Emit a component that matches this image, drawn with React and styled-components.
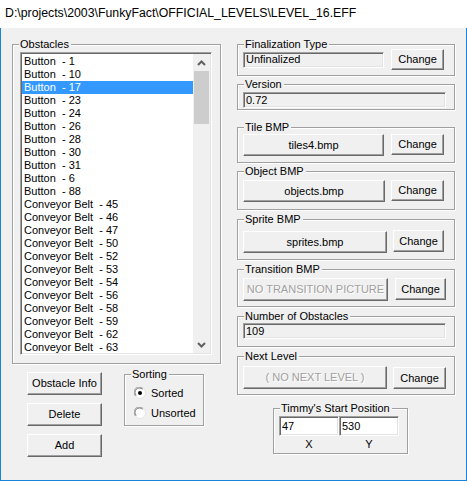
import React from 'react';
import styled, { createGlobalStyle } from 'styled-components';

const Global = createGlobalStyle`
  html, body { margin: 0; padding: 0; background: #fff; }
  body { font-family: "Liberation Sans", Arial, sans-serif; font-size: 11px; color: #000; }
  * { box-sizing: border-box; }
`;

const Window = styled.div`
  width: 467px;
  height: 481px;
  display: flex;
  flex-direction: column;
  background: #fff;
`;

const TitleBar = styled.div`
  height: 28px;
  flex: none;
  padding-left: 5px;
  padding-bottom: 2px;
  display: flex;
  align-items: center;
  font-size: 12.3px;
  background: #fff;
  white-space: nowrap;
`;

const Client = styled.div`
  flex: 1;
  background: #f0f0f0;
  border: 1px solid #1883d7;
  border-top: none;
  display: flex;
  padding: 16px 0 0 11px;
  gap: 16px;
`;

const Column = styled.div`
  width: ${(p) => p.$w}px;
  display: flex;
  flex-direction: column;
  flex: none;
`;

const Group = styled.div`
  position: relative;
  width: ${(p) => (p.$w ? `${p.$w}px` : 'auto')};
  height: ${(p) => p.$h}px;
  margin-top: ${(p) => p.$mt || 0}px;
  margin-left: ${(p) => p.$ml || 0}px;
  border: 1px solid #a0a0a0;
  box-shadow: inset 1px 1px 0 #fff, 1px 1px 0 #fff;
  padding: ${(p) => p.$pt || 0}px 0 0 ${(p) => (p.$pl ?? 5)}px;
  flex: none;
`;

const Label = styled.span`
  position: absolute;
  top: -7px;
  left: 6px;
  padding: 0 2px 0 1px;
  line-height: 13px;
  background: #f0f0f0;
  white-space: nowrap;
`;

const Row = styled.div`
  display: flex;
  align-items: ${(p) => p.$align || 'flex-start'};
`;

const Button = styled.button`
  font-family: inherit;
  font-size: 11px;
  color: ${(p) => (p.disabled ? '#a0a0a0' : '#000')};
  text-shadow: ${(p) => (p.disabled ? '1px 1px 0 #fff' : 'none')};
  background: #f0f0f0;
  width: ${(p) => p.$w}px;
  height: ${(p) => p.$h || 22}px;
  margin-left: ${(p) => p.$ml || 0}px;
  margin-top: ${(p) => p.$mt || 0}px;
  padding: 0;
  border: 1px solid;
  border-color: #fff #696969 #696969 #fff;
  box-shadow: inset -1px -1px 0 #a0a0a0;
  border-radius: 0;
  line-height: 13px;
  flex: none;
  white-space: nowrap;
`;

const TextBox = styled.div`
  width: ${(p) => p.$w}px;
  height: ${(p) => p.$h || 16}px;
  background: ${(p) => (p.$white ? '#fff' : '#f0f0f0')};
  border: 1px solid;
  border-color: #a0a0a0 #fff #fff #a0a0a0;
  box-shadow: inset 1px 1px 0 #696969, inset -1px -1px 0 #e3e3e3;
  padding: 0 0 0 2px;
  display: flex;
  align-items: center;
  line-height: 13px;
  flex: none;
`;

const ListBox = styled.div`
  width: 192px;
  height: 303px;
  display: flex;
  background: #fff;
  border: 1px solid;
  border-color: #a0a0a0 #fff #fff #a0a0a0;
  box-shadow: inset 1px 1px 0 #696969, inset -1px -1px 0 #e3e3e3;
  padding: 1px;
`;

const Items = styled.div`
  flex: 1;
  overflow: hidden;
  padding-top: 1px;
`;

const Item = styled.div`
  height: 13px;
  line-height: 13px;
  padding-left: 2px;
  white-space: pre;
  background: ${(p) => (p.$sel ? '#3399ff' : 'transparent')};
  color: ${(p) => (p.$sel ? '#fff' : '#000')};
`;

const ScrollBar = styled.div`
  width: 17px;
  background: #f0f0f0;
  display: flex;
  flex-direction: column;
  align-items: center;
`;

const ArrowBox = styled.div`
  height: 17px;
  width: 17px;
  display: flex;
  align-items: center;
  justify-content: center;
  flex: none;
`;

const Thumb = styled.div`
  width: 15px;
  height: 53px;
  background: #cdcdcd;
  flex: none;
`;

const Track = styled.div`
  flex: 1;
`;

const BottomRow = styled.div`
  display: flex;
  padding-left: 15px;
`;

const ButtonStack = styled.div`
  display: flex;
  flex-direction: column;
  gap: 8px;
  margin-top: 8px;
`;

const RadioRow = styled.label`
  display: flex;
  align-items: center;
  height: 14px;
  gap: 5px;
  margin-bottom: 6px;
`;

const AxisRow = styled.div`
  display: flex;
  margin-top: 2px;
`;

const Axis = styled.div`
  width: 60px;
  text-align: center;
  line-height: 13px;
`;

const Chevron = ({ up }) => (
  <svg width="9" height="6" viewBox="0 0 9 6">
    <path
      d={up ? 'M1 5 L4.5 1.5 L8 5' : 'M1 1 L4.5 4.5 L8 1'}
      fill="none"
      stroke="#606060"
      strokeWidth="2"
    />
  </svg>
);

const Radio = ({ checked }) => (
  <svg width="12" height="12" viewBox="0 0 12 12">
    <circle cx="6" cy="6" r="5.5" fill="#fff" stroke="#e3e3e3" />
    <path d="M1.5 9 A5 5 0 0 1 9 1.5" fill="none" stroke="#a0a0a0" strokeWidth="1" />
    <path d="M2.3 8.5 A4.2 4.2 0 0 1 8.5 2.3" fill="none" stroke="#696969" strokeWidth="0.8" />
    {checked && <circle cx="6" cy="6" r="2" fill="#000" />}
  </svg>
);

const obstacles = [
  'Button  - 1', 'Button  - 10', 'Button  - 17', 'Button  - 23', 'Button  - 24',
  'Button  - 26', 'Button  - 28', 'Button  - 30', 'Button  - 31', 'Button  - 6',
  'Button  - 88', 'Conveyor Belt  - 45', 'Conveyor Belt  - 46', 'Conveyor Belt  - 47',
  'Conveyor Belt  - 50', 'Conveyor Belt  - 52', 'Conveyor Belt  - 53', 'Conveyor Belt  - 54',
  'Conveyor Belt  - 56', 'Conveyor Belt  - 58', 'Conveyor Belt  - 59', 'Conveyor Belt  - 62',
  'Conveyor Belt  - 63',
];

export default function App() {
  return (
    <>
      <Global />
      <Window>
        <TitleBar>D:\projects\2003\FunkyFact\OFFICIAL_LEVELS\LEVEL_16.EFF</TitleBar>
        <Client>
          <Column $w={209}>
            <Group $h={320} $pt={7} $pl={7}>
              <Label>Obstacles</Label>
              <ListBox>
                <Items>
                  {obstacles.map((o, i) => (
                    <Item key={o} $sel={i === 2}>{o}</Item>
                  ))}
                </Items>
                <ScrollBar>
                  <ArrowBox><Chevron up /></ArrowBox>
                  <Thumb />
                  <Track />
                  <ArrowBox><Chevron /></ArrowBox>
                </ScrollBar>
              </ListBox>
            </Group>
            <BottomRow>
              <ButtonStack>
                <Button $w={75} $h={23}>Obstacle Info</Button>
                <Button $w={75} $h={23}>Delete</Button>
                <Button $w={75} $h={23}>Add</Button>
              </ButtonStack>
              <Group $w={80} $h={52} $mt={10} $ml={22} $pt={11} $pl={9}>
                <Label>Sorting</Label>
                <RadioRow><Radio checked />Sorted</RadioRow>
                <RadioRow><Radio />Unsorted</RadioRow>
              </Group>
            </BottomRow>
          </Column>

          <Column $w={218}>
            <Group $h={32} $pt={4}>
              <Label>Finalization Type</Label>
              <Row $align="center">
                <TextBox $w={141}>Unfinalized</TextBox>
                <Button $w={53} $h={21} $ml={7}>Change</Button>
              </Row>
            </Group>

            <Group $h={26} $mt={8} $pt={7}>
              <Label>Version</Label>
              <TextBox $w={203}>0.72</TextBox>
            </Group>

            <Group $h={36} $mt={17} $pt={6}>
              <Label>Tile BMP</Label>
              <Row>
                <Button $w={141}>tiles4.bmp</Button>
                <Button $w={53} $h={21} $ml={7}>Change</Button>
              </Row>
            </Group>

            <Group $h={39} $mt={8} $pt={8}>
              <Label>Object BMP</Label>
              <Row>
                <Button $w={142}>objects.bmp</Button>
                <Button $w={53} $h={21} $ml={6}>Change</Button>
              </Row>
            </Group>

            <Group $h={41} $mt={9} $pt={10}>
              <Label>Sprite BMP</Label>
              <Row>
                <Button $w={144} $mt={1}>sprites.bmp</Button>
                <Button $w={51} $h={22} $ml={6}>Change</Button>
              </Row>
            </Group>

            <Group $h={38} $mt={9} $pt={8}>
              <Label>Transition BMP</Label>
              <Row>
                <Button $w={145} $h={23} disabled>NO TRANSITION PICTURE</Button>
                <Button $w={51} $h={22} $ml={7}>Change</Button>
              </Row>
            </Group>

            <Group $h={31} $mt={9} $pt={6}>
              <Label>Number of Obstacles</Label>
              <TextBox $w={203}>109</TextBox>
            </Group>

            <Group $h={39} $mt={9} $pt={9}>
              <Label>Next Level</Label>
              <Row>
                <Button $w={144} $h={23} disabled>( NO NEXT LEVEL )</Button>
                <Button $w={53} $h={22} $ml={6} $mt={1}>Change</Button>
              </Row>
            </Group>

            <Group $w={135} $h={46} $mt={13} $ml={36} $pt={7}>
              <Label>Timmy's Start Position</Label>
              <Row>
                <TextBox $w={60} $h={20} $white>47</TextBox>
                <TextBox $w={60} $h={20} $white>530</TextBox>
              </Row>
              <AxisRow>
                <Axis>X</Axis>
                <Axis>Y</Axis>
              </AxisRow>
            </Group>
          </Column>
        </Client>
      </Window>
    </>
  );
}
